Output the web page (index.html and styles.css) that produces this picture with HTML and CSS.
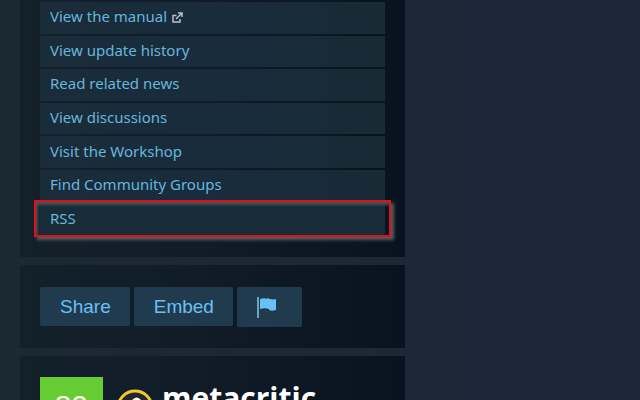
FILE: index.html
```html
<!doctype html>
<html lang="en">
	<head>
		<meta charset="utf-8">
		<title>Game details</title>
		<link rel="stylesheet" href="styles.css">
	</head>
	<body>
		<div class="sidebar">
			<div class="block links">
				<ul class="linkList">
					<li>
						<a href="#">View the manual
							<svg class="external" viewBox="0 0 11 11" width="11" height="11" aria-hidden="true">
								<path d="M4.500 3.500H1V10h7V7M4 7L9 2M6 1h4v4" fill="none" stroke="currentColor" stroke-width="1.500"/>
							</svg>
						</a>
					</li>
					<li><a href="#">View update history</a></li>
					<li><a href="#">Read related news</a></li>
					<li><a href="#">View discussions</a></li>
					<li><a href="#">Visit the Workshop</a></li>
					<li><a href="#">Find Community Groups</a></li>
					<li class="marked"><a href="#">RSS</a></li>
				</ul>
			</div>
			<div class="block share">
				<button type="button" class="btn">Share</button>
				<button type="button" class="btn">Embed</button>
				<button type="button" class="btn flag" aria-label="Report">
					<svg viewBox="0 0 21 21" width="21" height="21" aria-hidden="true">
						<path d="M0 0h2v21H0z" fill="#67a5c8"/>
						<path d="M3 2c3-1 5-1 7 0V1c3 1 6 2 9 1v11c-3 1-5 1-7 0v-1c-3-1-6-1-9 0z" fill="#67c1f5"/>
					</svg>
				</button>
			</div>
			<div class="block meta">
				<div class="score">89</div>
				<svg class="metaLogo" viewBox="0 0 38 38" width="38" height="38" aria-hidden="true">
					<circle cx="19" cy="19" r="17" fill="#242628" stroke="#f0c92e" stroke-width="3"/>
					<path d="M9 20l7-9q5-5 9 0l4 9-10 10z" fill="#fff"/>
				</svg>
				<div class="metaName">metacritic</div>
			</div>
		</div>
	</body>
</html>
```

FILE: styles.css
```css
* {
	box-sizing: border-box;
	margin: 0;
	padding: 0;
}
body {
	height: 100vh;
	overflow: hidden;
	background: linear-gradient(90deg, #1b2932 0, #1c2837 420px, #1c273a 520px);
	font-family: "Noto Sans", "Open Sans", sans-serif;
}
a {
	color: #67b6dc;
	text-decoration: none;
}
.sidebar {
	display: flex;
	flex-direction: column;
	gap: 8px;
	width: 385px;
	margin-left: 20px;
}
.block {
	padding: 20px;
	background: linear-gradient(90deg, #13212b 0, #101b27 50%, #07131f 100%);
}
.links {
	padding: 2px 20px 22px;
}
.linkList {
	display: grid;
	grid-auto-rows: 1fr;
	gap: 2px;
	min-height: 233px;
	list-style: none;
}
.linkList li {
	background: linear-gradient(90deg, #1b2c39, #182c3d 50%, #182a34);
}
.linkList a {
	display: flex;
	align-items: center;
	gap: 5px;
	height: 100%;
	padding: 0 10px 3px;
	font-size: 15px;
	line-height: 20px;
}
.external {
	margin-top: 2px;
	color: #b8c3ca;
}
.linkList .marked {
	position: relative;
	background: #182b39;
}
/* red frame round the feed link */
.marked::after {
	content: "";
	position: absolute;
	inset: -3px -6px -2px;
	border: 2px solid #df101b;
	box-shadow: 3px 3px 3px #5c5c5c, inset 2px 3px 3px #4c5050;
	pointer-events: none;
}
.share {
	display: flex;
	align-items: flex-start;
	gap: 4px;
	padding: 22px 20px 21px;
}
.btn {
	height: 39px;
	padding: 0 19px 0 20px;
	border: 0;
	border-radius: 2px;
	background: #213b4e;
	color: #67c1f5;
	font-family: "Liberation Sans", Arial, sans-serif;
	font-size: 19px;
	cursor: pointer;
}
.flag {
	display: flex;
	align-items: center;
	height: 40px;
	padding-right: 24px;
}
.meta {
	display: flex;
	align-items: flex-start;
	padding-top: 21px;
	color: #fff;
}
.score {
	width: 63px;
	height: 63px;
	background: #6c3;
	font-family: "Liberation Sans", Arial, sans-serif;
	font-size: 30px;
	line-height: 58px;
	text-align: center;
}
.metaLogo {
	margin: 12px 8px 0 13px;
}
.metaName {
	font-family: "Open Sans", "Noto Sans", sans-serif;
	font-size: 30px;
	font-weight: 700;
	line-height: 42px;
}
```
